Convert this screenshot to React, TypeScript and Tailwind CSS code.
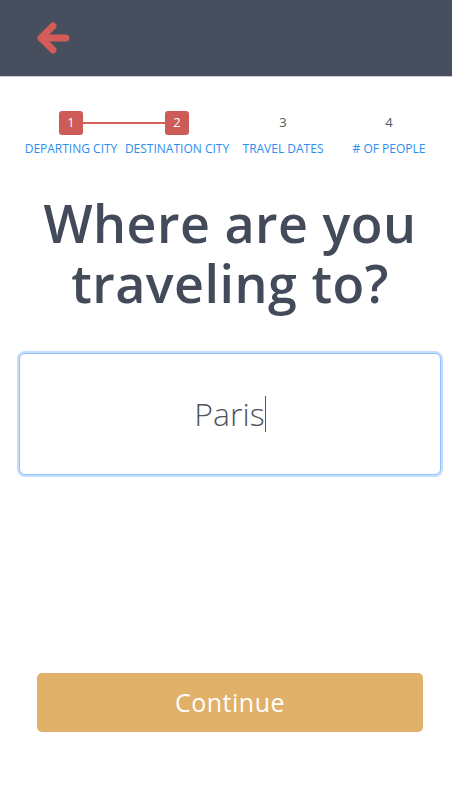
const steps = [
    { id: 1, label: "DEPARTING CITY", done: true },
    { id: 2, label: "DESTINATION CITY", done: true },
    { id: 3, label: "TRAVEL DATES", done: false },
    { id: 4, label: "# OF PEOPLE", done: false },
];

export default function App() {
    return (
        <main className="h-screen w-full overflow-hidden bg-white font-['Open_Sans',sans-serif] flex flex-col">
            <header className="h-[77px] shrink-0 bg-[#474e5d] border-b border-[#c9ccd3] flex items-center px-[36px]">
                <svg width="34" height="34" viewBox="0 0 34 34" fill="none">
                    <path d="M17 5 L5 17 L17 29 M5 17 H30" stroke="#d45c57" strokeWidth="7" strokeLinecap="round" strokeLinejoin="round" />
                </svg>
            </header>

            <div className="pl-[8px] flex flex-col">
                <div className="relative grid grid-cols-4 px-[10px] pt-[34px]">
                    <div className="absolute top-[45px] left-[75px] w-[82px] h-[2px] bg-[#d4605b]" />
                    {steps.map((s) => (
                        <div key={s.id} className="flex flex-col items-center">
                            {s.done ? (
                                <div className="relative z-10 h-6 w-6 rounded-[3px] bg-[#cd5b57] text-white text-[13px] flex items-center justify-center">
                                    {s.id}
                                </div>
                            ) : (
                                <div className="h-6 w-6 text-[#555] text-[13px] flex items-center justify-center">{s.id}</div>
                            )}
                            <div className="mt-[6px] text-[12px] leading-[16px] text-[#2b8ef0] whitespace-nowrap">{s.label}</div>
                        </div>
                    ))}
                </div>

                <h1 className="mt-[36px] text-center text-[52px] leading-[60px] font-semibold text-[#434a59] tracking-[0.5px]">
                    Where are you
                    <br />
                    traveling to?
                </h1>

                <div className="mx-[9px] mt-[38px] rounded-[8px] p-[2px] bg-[#c3dffd]">
                    <div className="h-[122px] rounded-[6px] border border-[#8fc2f8] bg-white flex items-center justify-center">
                        <span className="text-[32px] font-light text-[#4f5561]">Paris</span>
                        <span className="h-[36px] w-px bg-[#4f5561]" />
                    </div>
                </div>

                <div className="mx-[29px] mt-[196px]">
                    <button className="w-full h-[59px] rounded-[5px] bg-[#e1b069] text-white text-[25px] tracking-[0.5px]">
                        Continue
                    </button>
                </div>
            </div>
        </main>
    );
}
